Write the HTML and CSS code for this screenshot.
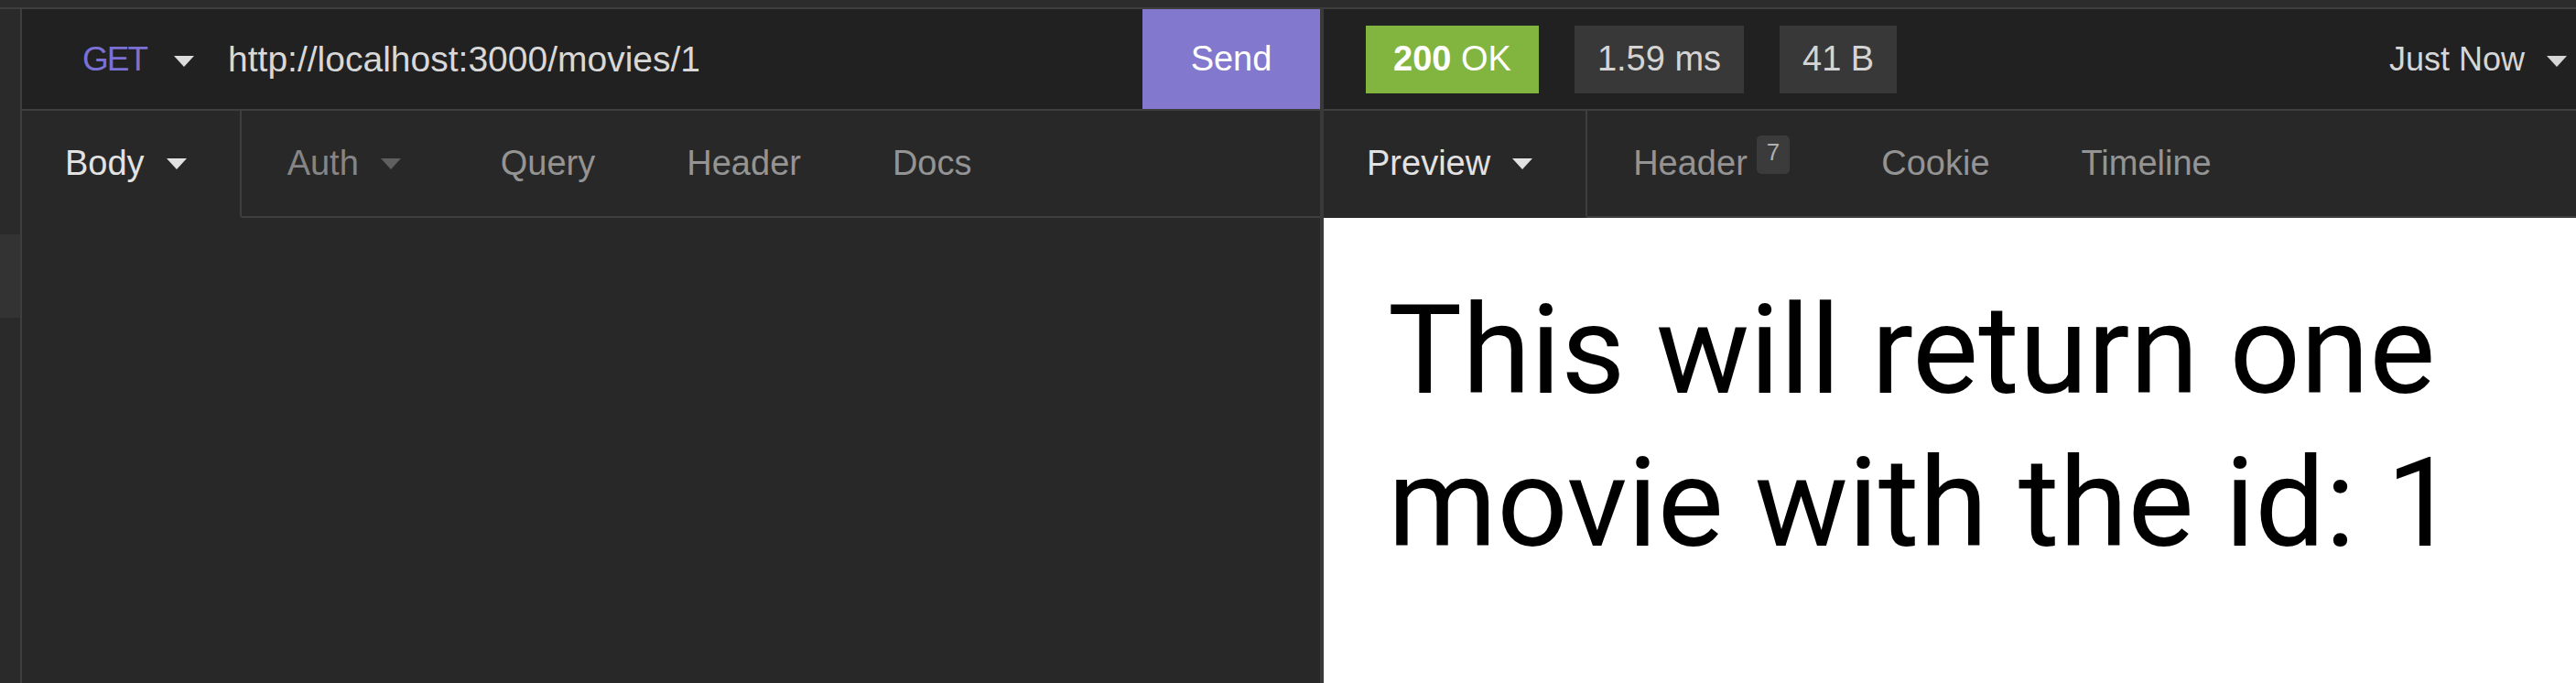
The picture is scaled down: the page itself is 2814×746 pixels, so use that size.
FILE: index.html
```html
<!DOCTYPE html>
<html lang="en">
<head>
    <meta charset="UTF-8">
    <meta name="viewport" content="width=device-width, initial-scale=1.0">
    <title>Insomnia - GET movie</title>
    <link rel="stylesheet" href="styles.css">
</head>
<body>
    <div class="app">
        <!-- Title strip -->
        <div class="titlebar"></div>

        <div class="workspace">
            <!-- Collapsed sidebar -->
            <aside class="sidebar">
                <div class="sidebar-item"></div>
            </aside>

            <!-- Request pane -->
            <section class="pane request">
                <div class="pane-header">
                    <div class="method">GET<span class="caret"></span></div>
                    <div class="url">http://localhost:3000/movies/1</div>
                    <button class="send">Send</button>
                </div>
                <nav class="tabs">
                    <div class="tab active tab-first">Body <span class="caret"></span></div>
                    <div class="tab dim">Auth <span class="caret"></span></div>
                    <div class="tab">Query</div>
                    <div class="tab">Header</div>
                    <div class="tab">Docs</div>
                    <div class="tab-fill"></div>
                </nav>
                <div class="pane-body"></div>
            </section>

            <!-- Response pane -->
            <section class="pane response">
                <div class="pane-header meta">
                    <div class="tag tag-ok"><strong>200</strong>&nbsp;OK</div>
                    <div class="tag">1.59 ms</div>
                    <div class="tag">41 B</div>
                    <div class="history">Just Now <span class="caret"></span></div>
                </div>
                <nav class="tabs">
                    <div class="tab active tab-first">Preview <span class="caret"></span></div>
                    <div class="tab">Header<span class="count">7</span></div>
                    <div class="tab">Cookie</div>
                    <div class="tab">Timeline</div>
                    <div class="tab-fill"></div>
                </nav>
                <div class="preview">
                    <h1>This will return one movie with the id: 1</h1>
                </div>
            </section>
        </div>
    </div>
</body>
</html>
```

FILE: styles.css
```css
body, html {
    margin: 0;
    padding: 0;
    height: 100%;
    overflow: hidden;
    font-family: 'Liberation Sans', Arial, sans-serif;
    background-color: #282828;
}

.app {
    display: flex;
    flex-direction: column;
    height: 100vh;
}

.titlebar {
    height: 8px;
    background-color: #2c2c2c;
    border-bottom: 2px solid #3e3e3e;
}

.workspace {
    flex: 1;
    display: flex;
    min-height: 0;
}

.sidebar {
    width: 22px;
    background-color: #2a2a2a;
    border-right: 2px solid #3e3e3e;
    padding-top: 246px;
}

.sidebar-item {
    height: 91px;
    background-color: #333;
}

.pane {
    display: flex;
    flex-direction: column;
    background-color: #282828;
}

.request {
    flex: 0 0 1422px;
    box-sizing: border-box;
    border-right: 4px solid #393939;
}

.response {
    flex: 1;
}

.pane-header {
    height: 109px;
    display: flex;
    align-items: center;
    background-color: #212121;
    border-bottom: 2px solid #3e3e3e;
    font-size: 38px;
}

.caret {
    display: inline-block;
    width: 0;
    height: 0;
    border-left: 11px solid transparent;
    border-right: 11px solid transparent;
    border-top: 12px solid currentColor;
    margin-left: 24px;
    vertical-align: middle;
}

.method {
    padding-left: 66px;
    color: #7b70d6;
    font-size: 37px;
    letter-spacing: -2px;
}

.method .caret {
    color: #dcdcdc;
    margin-left: 30px;
}

.url {
    flex: 1;
    padding-left: 37px;
    color: #d8d8d8;
    font-size: 39px;
}

.send {
    align-self: stretch;
    width: 194px;
    border: none;
    background-color: #8279ce;
    color: #fff;
    font-family: inherit;
    font-size: 38px;
    cursor: pointer;
}

.tabs {
    display: flex;
    height: 117px;
    font-size: 38px;
}

.tab {
    display: flex;
    align-items: center;
    padding: 0 50px;
    color: #949494;
    border-bottom: 2px solid #3e3e3e;
}

.tab.active {
    color: #e2e2e2;
    border-bottom-color: transparent;
    border-right: 2px solid #3e3e3e;
}

.tab-first {
    padding: 0 58px 0 47px;
}

.tab.dim {
    color: #858585;
    padding-right: 59px;
}

.tab.dim .caret {
    color: #5f5f5f;
}

.tab-fill {
    flex: 1;
    border-bottom: 2px solid #3e3e3e;
}

.count {
    align-self: flex-start;
    margin: 27px 0 0 10px;
    padding: 0 11px;
    height: 42px;
    line-height: 36px;
    font-size: 26px;
    color: #b0b0b0;
    background-color: #3b3b3b;
    border-radius: 5px;
}

.pane-body {
    flex: 1;
}

.meta {
    padding: 0 10px 0 46px;
    gap: 39px;
}

.tag {
    height: 74px;
    display: flex;
    align-items: center;
    padding: 0 25px;
    color: #d4d4d4;
    background-color: #383838;
}

.tag-ok {
    padding: 0 30px;
    color: #fff;
    background-color: #82b440;
}

.history {
    margin-left: auto;
    color: #d6d6d6;
    font-size: 36px;
}

.history .caret {
    margin-left: 14px;
}

.preview {
    flex: 1;
    background-color: #fff;
    padding: 61px 70px 0;
}

.preview h1 {
    margin: 0;
    font-family: Roboto, 'Noto Sans', sans-serif;
    font-weight: 400;
    font-size: 136px;
    line-height: 167px;
    color: #000;
}
```
